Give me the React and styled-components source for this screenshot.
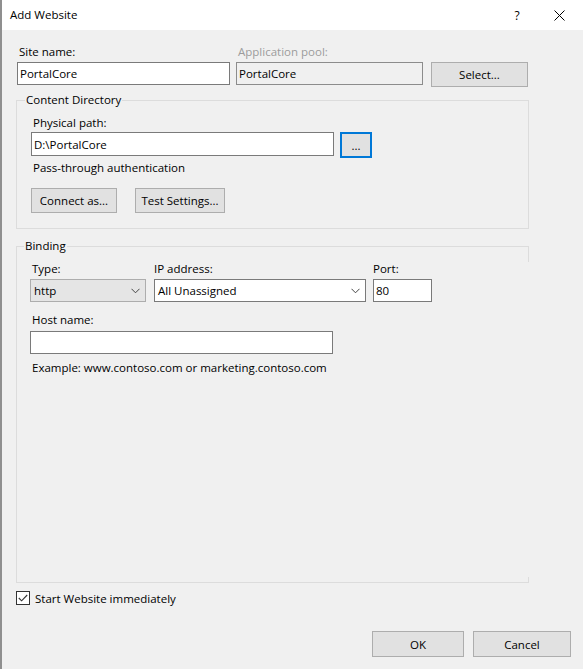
import React from 'react';
import styled, { createGlobalStyle } from 'styled-components';

const GlobalStyle = createGlobalStyle`
  html, body {
    margin: 0;
    padding: 0;
    background: #f0f0f0;
  }
  * {
    box-sizing: border-box;
  }
`;

const Window = styled.div`
  width: 583px;
  height: 669px;
  background: #f0f0f0;
  border-left: 2px solid #8f8f8f;
  font-family: 'Open Sans', 'Noto Sans', sans-serif;
  font-size: 11.5px;
  color: #000;
  overflow: hidden;
`;

const TitleBar = styled.div`
  height: 30px;
  background: #fff;
  display: flex;
  align-items: center;
  padding-left: 8px;
`;

const Title = styled.div`
  flex: 1;
  line-height: 16px;
`;

const TitleButton = styled.div`
  width: ${p => p.$w}px;
  display: flex;
  justify-content: center;
  align-items: center;
  font-size: 12px;
`;

const Body = styled.div`
  padding: 14px 0 0 14px;
`;

const TopRow = styled.div`
  display: flex;
  align-items: flex-start;
  padding-left: 1px;
`;

const Field = styled.div`
  display: flex;
  flex-direction: column;
  margin-right: ${p => p.$mr || 0}px;
`;

const Label = styled.div`
  height: 16px;
  line-height: 16px;
  padding-left: ${p => p.$pl ?? 2}px;
  margin-bottom: ${p => p.$mb ?? 2}px;
  margin-top: ${p => p.$mt || 0}px;
  color: ${p => (p.$disabled ? '#9c9c9c' : '#000')};
  white-space: nowrap;
`;

const Input = styled.div`
  width: ${p => p.$w}px;
  height: ${p => p.$h || 23}px;
  border: 1px solid ${p => (p.$disabled ? '#8c8c8c' : '#7a7a7a')};
  background: ${p => (p.$disabled ? '#f0f0f0' : '#fff')};
  padding-left: 2px;
  display: flex;
  align-items: center;
  white-space: nowrap;
`;

const Select = styled(Input)`
  background: ${p => (p.$gray ? '#e5e5e5' : '#fff')};
  border-color: ${p => (p.$gray ? '#adadad' : '#7a7a7a')};
  padding-left: 3px;
  padding-right: 5px;
  justify-content: space-between;
`;

const Button = styled.div`
  width: ${p => p.$w}px;
  height: ${p => p.$h || 25}px;
  background: #e1e1e1;
  border: ${p => (p.$focus ? '2px solid #0078d7' : '1px solid #adadad')};
  display: flex;
  align-items: center;
  justify-content: center;
  white-space: nowrap;
  margin-right: ${p => p.$mr || 0}px;
  margin-left: ${p => p.$ml || 0}px;
  margin-top: ${p => p.$mt || 0}px;
`;

const Group = styled.div`
  position: relative;
  width: 513px;
  height: ${p => p.$h}px;
  margin-top: ${p => p.$mt}px;
  border: 1px solid #dcdcdc;
  border-right-color: ${p => (p.$brokenRight ? 'transparent' : '#dcdcdc')};
  padding: 14px 0 0 ${p => p.$pl}px;

  ${p =>
    p.$brokenRight &&
    `
    &::before, &::after {
      content: '';
      position: absolute;
      right: -1px;
      width: 1px;
      background: #dcdcdc;
    }
    &::before { top: -1px; height: 16px; }
    &::after { bottom: -1px; height: 6px; }
  `}
`;

const Legend = styled.span`
  position: absolute;
  top: -9px;
  left: ${p => p.$left}px;
  padding: 0 1px;
  line-height: 16px;
  background: #f0f0f0;
`;

const Row = styled.div`
  display: flex;
  align-items: flex-start;
  margin-top: ${p => p.$mt || 0}px;
`;

const Text = styled.div`
  line-height: 16px;
  padding-left: 2px;
  margin-top: ${p => p.$mt || 0}px;
`;

const CheckRow = styled.div`
  display: flex;
  align-items: center;
  margin-top: 8px;
  height: 14px;
`;

const CheckBox = styled.div`
  width: 14px;
  height: 14px;
  border: 1px solid #333;
  background: #fff;
  display: flex;
  align-items: center;
  justify-content: center;
  margin-right: 5px;
`;

const Footer = styled.div`
  display: flex;
  justify-content: flex-end;
  padding-right: 12px;
  margin-top: 26px;
`;

const Chevron = () => (
  <svg width="9" height="6" viewBox="0 0 9 6">
    <polyline points="0.5,0.8 4.5,4.8 8.5,0.8" fill="none" stroke="#444" strokeWidth="1" />
  </svg>
);

const CloseIcon = () => (
  <svg width="11" height="11" viewBox="0 0 11 11">
    <path d="M0.5 0.5 L10.5 10.5 M10.5 0.5 L0.5 10.5" stroke="#000" strokeWidth="1" />
  </svg>
);

const Check = () => (
  <svg width="10" height="8" viewBox="0 0 10 8">
    <polyline points="0.8,4 3.6,6.8 9.2,1" fill="none" stroke="#333" strokeWidth="1.1" />
  </svg>
);

export default function App() {
  return (
    <>
      <GlobalStyle />
      <Window>
        <TitleBar>
          <Title>Add Website</Title>
          <TitleButton $w={14}>?</TitleButton>
          <TitleButton $w={22} />
          <TitleButton $w={26}><CloseIcon /></TitleButton>
          <TitleButton $w={11} />
        </TitleBar>
        <Body>
          <TopRow>
            <Field $mr={6}>
              <Label>Site name:</Label>
              <Input $w={213}>PortalCore</Input>
            </Field>
            <Field $mr={8}>
              <Label $disabled>Application pool:</Label>
              <Input $w={187} $disabled>PortalCore</Input>
            </Field>
            <Button $w={97} $mt={18}>Select...</Button>
          </TopRow>

          <Group $mt={13} $h={129} $pl={14}>
            <Legend $left={8}>Content Directory</Legend>
            <Label $mb={1}>Physical path:</Label>
            <Row>
              <Input $w={303} $h={24}>D:\PortalCore</Input>
              <Button $w={32} $h={26} $focus $ml={6}>...</Button>
            </Row>
            <Text $mt={2}>Pass-through authentication</Text>
            <Row $mt={12}>
              <Button $w={86} $mr={18}>Connect as...</Button>
              <Button $w={90}>Test Settings...</Button>
            </Row>
          </Group>

          <Group $mt={17} $h={337} $pl={13} $brokenRight>
            <Legend $left={7}>Binding</Legend>
            <Row>
              <Field $mr={8}>
                <Label>Type:</Label>
                <Select $w={116} $gray>http<Chevron /></Select>
              </Field>
              <Field $mr={7}>
                <Label $pl={0}>IP address:</Label>
                <Select $w={212}>All Unassigned<Chevron /></Select>
              </Field>
              <Field>
                <Label $pl={0}>Port:</Label>
                <Input $w={59}>80</Input>
              </Field>
            </Row>
            <Label $mt={10} $mb={3}>Host name:</Label>
            <Input $w={303} />
            <Text $mt={6}>Example: www.contoso.com or marketing.contoso.com</Text>
          </Group>

          <CheckRow>
            <CheckBox><Check /></CheckBox>
            Start Website immediately
          </CheckRow>

          <Footer>
            <Button $w={92} $h={26} $mr={9}>OK</Button>
            <Button $w={98} $h={26}>Cancel</Button>
          </Footer>
        </Body>
      </Window>
    </>
  );
}
